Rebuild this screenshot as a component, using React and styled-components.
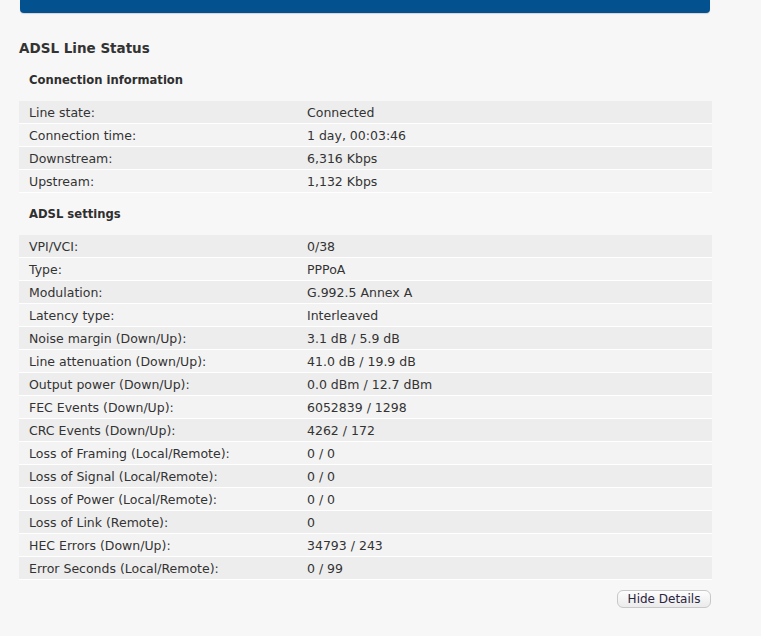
import { createGlobalStyle, styled } from 'styled-components';

const GlobalStyle = createGlobalStyle`
  html, body {
    margin: 0;
    padding: 0;
    background: #f7f7f7;
  }
  body {
    font-family: Verdana, "DejaVu Sans", sans-serif;
    color: #333;
  }
`;

const connection = [
  ['Line state:', 'Connected'],
  ['Connection time:', '1 day, 00:03:46'],
  ['Downstream:', '6,316 Kbps'],
  ['Upstream:', '1,132 Kbps'],
];

const settings = [
  ['VPI/VCI:', '0/38'],
  ['Type:', 'PPPoA'],
  ['Modulation:', 'G.992.5 Annex A'],
  ['Latency type:', 'Interleaved'],
  ['Noise margin (Down/Up):', '3.1 dB / 5.9 dB'],
  ['Line attenuation (Down/Up):', '41.0 dB / 19.9 dB'],
  ['Output power (Down/Up):', '0.0 dBm / 12.7 dBm'],
  ['FEC Events (Down/Up):', '6052839 / 1298'],
  ['CRC Events (Down/Up):', '4262 / 172'],
  ['Loss of Framing (Local/Remote):', '0 / 0'],
  ['Loss of Signal (Local/Remote):', '0 / 0'],
  ['Loss of Power (Local/Remote):', '0 / 0'],
  ['Loss of Link (Remote):', '0'],
  ['HEC Errors (Down/Up):', '34793 / 243'],
  ['Error Seconds (Local/Remote):', '0 / 99'],
];

function StatusTable({ rows }) {
  return (
    <Table>
      {rows.map(([label, value], i) => (
        <Row key={label} $odd={i % 2 === 0}>
          <Label>{label}</Label>
          <Value>{value}</Value>
        </Row>
      ))}
    </Table>
  );
}

function App() {
  return (
    <>
      <GlobalStyle />
      <Page>
        <TopBar />
        <Title>ADSL Line Status</Title>
        <SectionTitle>Connection information</SectionTitle>
        <StatusTable rows={connection} />
        <SectionTitle>ADSL settings</SectionTitle>
        <StatusTable rows={settings} />
        <Actions>
          <Button>Hide Details</Button>
        </Actions>
      </Page>
    </>
  );
}
export default App;

export const Page = styled.div`
  width: 693px;
  padding: 0 0 0 19px;
  height: 636px;
  box-sizing: content-box;
`;

export const TopBar = styled.div`
  margin-left: 1px;
  width: 690px;
  height: 13px;
  background: #03518f;
  border-radius: 0 0 4px 4px;
  box-shadow: 0 1px 1px rgba(0, 0, 0, 0.15);
`;

export const Title = styled.h2`
  margin: 27px 0 2px 0;
  font-size: 13.5px;
  font-weight: bold;
  line-height: 17px;
  color: #333;
`;

export const SectionTitle = styled.h3`
  margin: 0;
  padding: 14px 10px 13px 10px;
  font-size: 11.6px;
  font-weight: bold;
  line-height: 15px;
  color: #2f2f2f;
`;

export const Table = styled.div`
  margin: 0;
`;

export const Row = styled.div`
  display: grid;
  grid-template-columns: 288px 1fr;
  height: 21px;
  padding-top: 1px;
  border-bottom: 1px solid #ffffff;
  background: ${(p) => (p.$odd ? '#ededed' : '#f3f3f3')};
  font-size: 12.5px;
  line-height: 21px;
  color: #333;
`;

export const Label = styled.div`
  padding-left: 10px;
`;

export const Value = styled.div``;

export const Actions = styled.div`
  display: flex;
  justify-content: flex-end;
  padding-top: 10px;
  padding-right: 1px;
`;

export const Button = styled.button`
  height: 18px;
  width: 94px;
  padding: 0;
  font-family: Verdana, "DejaVu Sans", sans-serif;
  font-size: 12px;
  line-height: 16px;
  color: #2b2440;
  border: 1px solid #c8c8c8;
  border-radius: 6px;
  background: linear-gradient(#fdfdfd, #ebebeb);
  cursor: pointer;
`;
